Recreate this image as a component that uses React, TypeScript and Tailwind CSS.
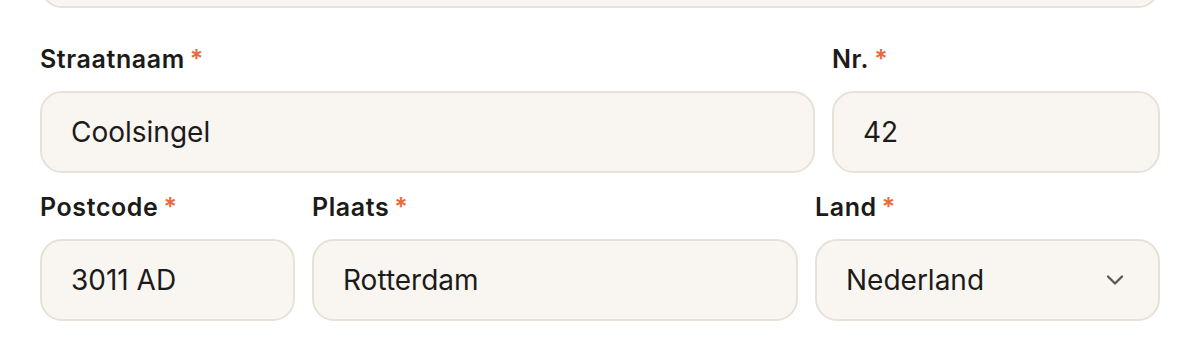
import { ChevronDown } from "lucide-react";

const font = { fontFamily: "Inter, 'Noto Sans', sans-serif" };

function Label({ text }: { text: string }) {
  return (
    <label className="mb-[17px] flex items-center gap-[5px] text-[25px] leading-[30px] font-semibold tracking-[0.6px] text-[#1c1b19]">
      {text}
      <span className="text-[#ea6a3f]">*</span>
    </label>
  );
}

function Field({ label, value }: { label: string; value: string }) {
  return (
    <div className="flex flex-col">
      <Label text={label} />
      <div className="flex h-[82px] items-center rounded-[22px] border-2 border-[#e7e1d8] bg-[#f9f6f1] px-[29px] text-[28px] text-[#1c1b19]">
        {value}
      </div>
    </div>
  );
}

function SelectField({ label, value }: { label: string; value: string }) {
  return (
    <div className="flex flex-col">
      <Label text={label} />
      <div className="flex h-[82px] items-center justify-between rounded-[22px] border-2 border-[#e7e1d8] bg-[#f9f6f1] pl-[29px] pr-[29px] text-[28px] text-[#1c1b19]">
        <span>{value}</span>
        <ChevronDown className="h-[28px] w-[28px] text-[#5b5853]" strokeWidth={2} />
      </div>
    </div>
  );
}

export default function App() {
  return (
    <div className="h-[360px] overflow-hidden bg-white px-[40px]" style={font}>
      <div className="-mt-[74px] h-[82px] rounded-[22px] border-2 border-[#e7e1d8] bg-[#f9f6f1]" />
      <div className="mt-[36px] grid grid-cols-[1fr_328px] gap-[17px]">
        <Field label="Straatnaam" value="Coolsingel" />
        <Field label="Nr." value="42" />
      </div>
      <div className="mt-[19px] grid grid-cols-[255px_1fr_345px] gap-[17px]">
        <Field label="Postcode" value="3011 AD" />
        <Field label="Plaats" value="Rotterdam" />
        <SelectField label="Land" value="Nederland" />
      </div>
    </div>
  );
}
